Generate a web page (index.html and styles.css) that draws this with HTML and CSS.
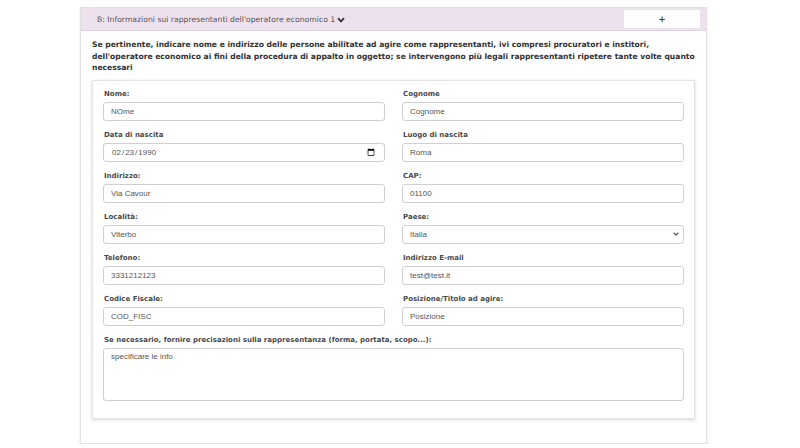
FILE: index.html
```html
<!DOCTYPE html>
<html lang="it">
<head>
<meta charset="utf-8">
<title>Rappresentanti</title>
<link rel="stylesheet" href="styles.css">
</head>
<body>
<div class="panel">
  <div class="panel-head">
    <span class="title">B: Informazioni sui rappresentanti dell'operatore economico 1
      <svg class="chev" width="8" height="6" viewBox="0 0 8 6"><path d="M1 1.2 L4 4.4 L7 1.2" fill="none" stroke="#333" stroke-width="1.7"/></svg>
    </span>
    <button class="add">+</button>
  </div>
  <div class="panel-body">
    <p class="intro">Se pertinente, indicare nome e indirizzo delle persone abilitate ad agire come rappresentanti, ivi compresi procuratori e institori, dell'operatore economico ai fini della procedura di appalto in oggetto; se intervengono più legali rappresentanti ripetere tante volte quanto necessari</p>
    <div class="card">
      <div class="grid">
        <div class="field"><label>Nome:</label><input type="text" value="NOme"></div>
        <div class="field"><label>Cognome</label><input type="text" value="Cognome"></div>
        <div class="field"><label>Data di nascita</label><input type="date" value="1990-02-23"></div>
        <div class="field"><label>Luogo di nascita</label><input type="text" value="Roma"></div>
        <div class="field"><label>Indirizzo:</label><input type="text" value="Via Cavour"></div>
        <div class="field"><label>CAP:</label><input type="text" value="01100"></div>
        <div class="field"><label>Località:</label><input type="text" value="Viterbo"></div>
        <div class="field"><label>Paese:</label><select><option>Italia</option></select></div>
        <div class="field"><label>Telefono:</label><input type="text" value="3331212123"></div>
        <div class="field"><label>Indirizzo E-mail</label><input type="text" value="test@test.it"></div>
        <div class="field"><label>Codice Fiscale:</label><input type="text" value="COD_FISC"></div>
        <div class="field"><label>Posizione/Titolo ad agire:</label><input type="text" value="Posizione"></div>
        <div class="field wide"><label>Se necessario, fornire precisazioni sulla rappresentanza (forma, portata, scopo...):</label><textarea>specificare le info</textarea></div>
      </div>
    </div>
  </div>
</div>
</body>
</html>
```

FILE: styles.css
```css
* { box-sizing: border-box; }
html, body { margin: 0; padding: 0; background: #fff; }
body { font-family: "DejaVu Sans", Verdana, sans-serif; color: #333; }

.panel {
  margin: 7px 0 0 80px;
  width: 627px;
  border: 1px solid #e2e2e2;
  box-shadow: 0 1px 2px rgba(0,0,0,0.12);
  background: #fff;
}
.panel-head {
  height: 23px;
  background: #ede1ed;
  border-bottom: 1px solid #e0d4e0;
  display: flex;
  align-items: center;
  justify-content: space-between;
  padding: 0 6px 0 16px;
}
.title {
  font-size: 7.7px;
  color: #555;
  display: flex;
  align-items: center;
  gap: 2px;
}
.chev { margin-top: 1px; }
.add {
  width: 76px;
  height: 18px;
  border: none;
  background: #fff;
  font-family: "DejaVu Sans", sans-serif;
  font-weight: bold;
  font-size: 9px;
  color: #444;
  padding: 0;
  line-height: 18px;
}
.panel-body { padding: 8px 11px 24px 11px; }
.intro {
  margin: 0 0 6px 0;
  font-size: 7.6px;
  font-weight: bold;
  line-height: 11.5px;
  color: #333;
}
.card {
  border: 1px solid #e4e4e4;
  box-shadow: 0 1px 3px rgba(0,0,0,0.18);
  padding: 8px 10px 17px 10px;
}
.grid {
  display: grid;
  grid-template-columns: 282px 282px;
  column-gap: 17px;
  row-gap: 9px;
}
.field { display: flex; flex-direction: column; }
.field.wide { grid-column: 1 / 3; }
label {
  font-size: 7px;
  font-weight: bold;
  color: #4a4a4a;
  line-height: 10px;
  margin: 0 0 3px 1px;
}
input, select, textarea {
  height: 19px;
  border: 1px solid #d0d0d0;
  border-radius: 3px;
  font-family: "Liberation Sans", Arial, sans-serif;
  font-size: 8px;
  color: #555;
  padding: 0 7px;
  background-color: #fff;
  width: 100%;
  margin: 0;
}
select {
  -webkit-appearance: none;
  appearance: none;
  padding: 0 7px;
  background-image: url("data:image/svg+xml,%3Csvg xmlns='http://www.w3.org/2000/svg' width='6' height='4' viewBox='0 0 6 4'%3E%3Cpath d='M0.6 0.6 L3 3 L5.4 0.6' fill='none' stroke='%23555' stroke-width='1.3'/%3E%3C/svg%3E");
  background-repeat: no-repeat;
  background-position: right 4px center;
  background-size: 6px 4px;
}
textarea {
  height: 53px;
  padding: 3px 7px;
  resize: none;
  display: block;
}
```
